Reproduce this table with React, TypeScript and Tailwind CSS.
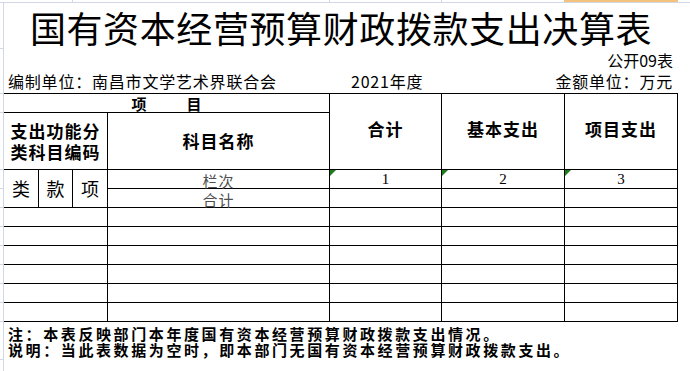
const ticks = [46, 45, 19, 57, 19, 19, 19, 19, 19, 19, 19, 19, 38];

const cell = "border-r border-b border-black flex items-center justify-center";

const Flag = () => (
  <span className="absolute left-0 top-0 w-0 h-0 border-t-[6px] border-r-[6px] border-t-[#1a7f1a] border-r-transparent" />
);

const App = () => {
  const emptyRows = [0, 1, 2, 3, 4, 5];

  return (
    <div
      className="w-[690px] h-[371px] bg-white overflow-hidden text-black"
      style={{ fontFamily: '"Noto Sans CJK SC", "Noto Sans", sans-serif' }}
    >
      {/* sheet edge */}
      <div className="flex h-[3px] border-b border-[#d0d7e5]">
        <div className="w-[73px] border-r border-[#d0d7e5]" />
        <div className="w-[257px] border-r border-[#d0d7e5]" />
        <div className="w-[112px] border-r border-[#d0d7e5]" />
        <div className="w-[122px]" />
        <div className="w-[114px] bg-[#f5c27e]" />
      </div>

      <div className="flex">
        <div className="w-[3px] flex flex-col">
          {ticks.map((h, i) => (
            <div key={i} className="border-b border-[#d0d7e5]" style={{ height: h }} />
          ))}
        </div>

        <div className="flex-1 border-l border-[#d0d7e5] min-h-[368px]">
          <div className="w-[674px] h-[45px] flex items-center justify-center pt-[3px]">
            <h1 className="text-[36px] leading-[36px] tracking-[0.6px] font-normal">
              国有资本经营预算财政拨款支出决算表
            </h1>
          </div>

          <div className="h-[21px] flex items-center justify-end pr-[17px] pt-[2px] text-[16px] leading-[16px]">
            公开09表
          </div>

          <div className="h-[24px] flex items-center text-[16px] leading-[16px] tracking-[0.8px]">
            <span className="w-[347px] pl-[4px]">编制单位：南昌市文学艺术界联合会</span>
            <span>2021年度</span>
            <span className="ml-auto pr-[17px]">金额单位：万元</span>
          </div>

          <div className="w-[674px] grid grid-cols-[35px_34px_35px_222px_112px_123px_113px] grid-rows-[19px_57px_19px_19px_repeat(6,19px)] border-t border-black">
            <div className={`${cell} col-span-4 gap-[40px] text-[15px] font-bold leading-none`}>
              <span>项</span>
              <span>目</span>
            </div>
            <div className={`${cell} row-span-2 text-[17px] font-bold tracking-[1px] pb-[6px]`}>合计</div>
            <div className={`${cell} row-span-2 text-[17px] font-bold tracking-[1px] pb-[6px]`}>基本支出</div>
            <div className={`${cell} row-span-2 text-[17px] font-bold tracking-[1px] pb-[6px]`}>项目支出</div>

            <div className={`${cell} col-span-3 flex-col text-[17px] font-bold leading-[21px] tracking-[1px]`}>
              <span>支出功能分</span>
              <span>类科目编码</span>
            </div>
            <div className={`${cell} text-[17px] font-bold tracking-[1px]`}>科目名称</div>

            <div className={`${cell} row-span-2 text-[18px]`}>类</div>
            <div className={`${cell} row-span-2 text-[18px]`}>款</div>
            <div className={`${cell} row-span-2 text-[18px]`}>项</div>
            <div className={`${cell} items-end text-[15px] leading-[15px] text-[#505050] tracking-[1px]`}>
              <span>栏次</span>
            </div>
            {["1", "2", "3"].map((n) => (
              <div
                key={n}
                className={`${cell} relative items-end text-[15px] leading-[15px]`}
                style={{ fontFamily: '"Liberation Serif", serif' }}
              >
                <Flag />
                <span className="mb-[1px]">{n}</span>
              </div>
            ))}

            <div className={`${cell} items-end text-[15px] leading-[15px] text-[#505050] tracking-[1px]`}>
              <span>合计</span>
            </div>
            <div className={cell} />
            <div className={cell} />
            <div className={cell} />

            {emptyRows.map((r) => (
              <div key={r} className="contents">
                <div className={`${cell} col-span-3`} />
                <div className={cell} />
                <div className={cell} />
                <div className={cell} />
                <div className={cell} />
              </div>
            ))}
          </div>

          <div className="pt-[4px] pl-[4px] text-[15px] leading-[16px] font-bold tracking-[2.6px]">
            <p>注：本表反映部门本年度国有资本经营预算财政拨款支出情况。</p>
            <p>说明：当此表数据为空时，即本部门无国有资本经营预算财政拨款支出。</p>
          </div>
        </div>
      </div>
    </div>
  );
};

export default App;
